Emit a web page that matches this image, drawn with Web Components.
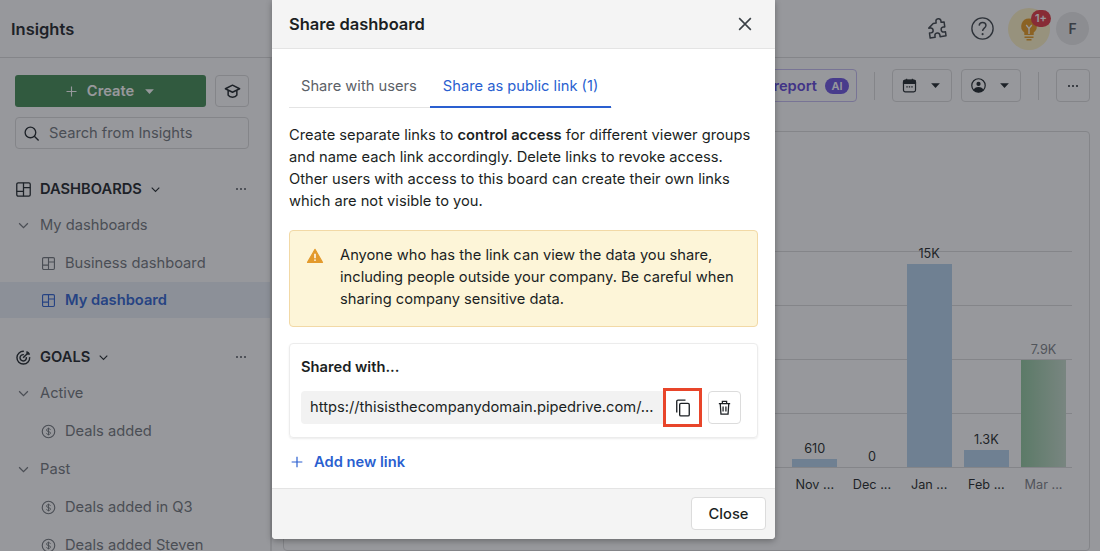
<!DOCTYPE html>
<html lang="en">
<head>
<meta charset="UTF-8">
<title>Insights - Share dashboard</title>
<style>
  html, body { margin: 0; height: 100%; overflow: hidden; }
  body { font-family: Inter, "Liberation Sans", sans-serif; font-size: 14.7px; color: #1b1f23; background: #fff; }
</style>
</head>
<body>

<script>
const ICONS = {
  plus: '<path d="M12 4v16M4 12h16" fill="none" stroke="currentColor" stroke-width="1.8"/>',
  caret: '<path d="M5 8.500h14l-7 7.500z" fill="currentColor"/>',
  chevron: '<path d="M5 8.500l7 7 7-7" fill="none" stroke="currentColor" stroke-width="2"/>',
  close: '<path d="M5 5l14 14M19 5L5 19" fill="none" stroke="currentColor" stroke-width="1.900"/>',
  dots: '<circle cx="6" cy="12" r="1.500" fill="currentColor"/><circle cx="12" cy="12" r="1.500" fill="currentColor"/><circle cx="18" cy="12" r="1.500" fill="currentColor"/>',
  search: '<circle cx="10.500" cy="10.500" r="7.500" fill="none" stroke="currentColor" stroke-width="1.900"/><path d="M16 16l6 6" fill="none" stroke="currentColor" stroke-width="1.900"/>',
  grad: '<path d="M12 4l9 4.500-9 4.500-9-4.500zM6.500 11v5.500c2 3.500 9 3.500 11 0V11" fill="none" stroke="currentColor" stroke-width="1.900" stroke-linejoin="round"/>',
  board: '<rect x="2.500" y="2.500" width="19" height="19" rx="2" fill="none" stroke="currentColor" stroke-width="1.800"/><path d="M12 2.500v19M2.500 14.500H12M12 9.500h9.500" fill="none" stroke="currentColor" stroke-width="1.800"/>',
  target: '<path d="M12.500 3.300A9 9 0 1 0 20.700 11.500" fill="none" stroke="currentColor" stroke-width="2"/><path d="M12.500 8A4.500 4.500 0 1 0 16 11.500" fill="none" stroke="currentColor" stroke-width="2"/><path d="M11.500 12.500L19.500 4.500M17 3v4h4" fill="none" stroke="currentColor" stroke-width="2"/>',
  dollar: '<circle cx="12" cy="12" r="10" fill="none" stroke="currentColor" stroke-width="1.800"/><path d="M15.200 9.200c-.5-1.300-1.700-1.800-3.200-1.800-1.800 0-3.200.9-3.200 2.300 0 3.200 6.400 1.600 6.400 4.800 0 1.400-1.400 2.300-3.200 2.300-1.600 0-2.800-.6-3.300-1.900M12 5.800v12.400" fill="none" stroke="currentColor" stroke-width="1.500"/>',
  puzzle: '<path d="M9 6h3V4.500a2.500 2.500 0 0 1 5 0V6h3v5h-1.500a2.500 2.500 0 0 0 0 5H20v4h-6v-1.500a2.500 2.500 0 0 0-5 0V20H4v-5h1.500a2.500 2.500 0 0 0 0-5H4l5-4z" fill="none" stroke="currentColor" stroke-width="1.500" stroke-linejoin="round" transform="rotate(-8 12 12)"/>',
  help: '<circle cx="12" cy="12" r="10.200" fill="none" stroke="currentColor" stroke-width="1.300"/><path d="M8.800 9.300c.2-1.900 1.600-3 3.300-3 1.800 0 3.200 1.200 3.200 2.800 0 2.500-3.200 2.600-3.200 5.200" fill="none" stroke="currentColor" stroke-width="1.400"/><circle cx="12.100" cy="17.400" r="1" fill="currentColor"/>',
  bulb: '<path d="M12 1.500a7.800 7.800 0 0 0-4.700 14V18h9.400v-2.500A7.800 7.800 0 0 0 12 1.500z" fill="currentColor"/><path d="M7.500 19.500h9V21h-9zM9.500 22h5v1.500h-5z" fill="currentColor"/><path d="M9.200 8l2.800 3.500L14.800 8M12 11.500V17" fill="none" stroke="#fff" stroke-width="1.300"/>',
  calendar: '<rect x="3.500" y="4.500" width="17" height="16.500" rx="2.500" fill="none" stroke="currentColor" stroke-width="1.700"/><path d="M3.500 9h17V7a2.500 2.500 0 0 0-2.500-2.500H6A2.500 2.500 0 0 0 3.500 7zM8 2.500v3M16 2.500v3" fill="currentColor" stroke="currentColor" stroke-width="1.500"/><path d="M7.500 14h2M11 14h2M14.500 14h2" stroke="currentColor" stroke-width="1.700"/>',
  user: '<circle cx="12" cy="12" r="9.500" fill="none" stroke="currentColor" stroke-width="1.700"/><circle cx="12" cy="9.800" r="3" fill="currentColor"/><path d="M5 18.500c1-3 3.500-4.500 7-4.500s6 1.500 7 4.500a9.500 9.500 0 0 1-14 0z" fill="currentColor"/>',
  warning: '<path d="M12 3l10 17.500H2z" fill="currentColor" stroke="currentColor" stroke-width="1.500" stroke-linejoin="round"/><path d="M12 9v6" stroke="#fff" stroke-width="2"/><circle cx="12" cy="17.500" r="1.100" fill="#fff"/>',
  copy: '<rect x="8" y="6.500" width="11.500" height="15" rx="1.500" fill="none" stroke="currentColor" stroke-width="1.600"/><path d="M4.500 17.500V4A1.500 1.500 0 0 1 6 2.500h9" fill="none" stroke="currentColor" stroke-width="1.600"/>',
  trash: '<path d="M4 6.500h16M9 6V3.500h6V6M6 6.500l1 15h10l1-15M10 10.500v7M14 10.500v7" fill="none" stroke="currentColor" stroke-width="1.800"/>'
};

class UiIcon extends HTMLElement {
  connectedCallback() {
    const size = this.getAttribute('size') || 16;
    this.attachShadow({ mode: 'open' }).innerHTML = `
      <style>:host { display: inline-flex; flex: none; } svg { display: block; }</style>
      <svg width="${size}" height="${size}" viewBox="0 0 24 24">${ICONS[this.getAttribute('name')]}</svg>`;
  }
}
customElements.define('ui-icon', UiIcon);

class TopBar extends HTMLElement {
  constructor() {
    super();
    this.attachShadow({ mode: 'open' }).innerHTML = `
      <style>
        :host { display: flex; align-items: center; height: 58px; box-sizing: border-box; border-bottom: 1px solid #dcdcdc; padding: 0 11px; }
        h1 { margin: 0; font-size: 16.500px; font-weight: 600; flex: 1; color: #192024; }
        .tools { display: flex; align-items: center; color: #3a4046; }
        .puzzle { margin-right: 21px; }
        .tip { position: relative; width: 42px; height: 42px; border-radius: 50%; background: #fff3c4; margin: 0 6px 0 13px; display: flex; align-items: center; justify-content: center; color: #e89a1c; }
        .badge { position: absolute; left: 23px; top: 2px; width: 20px; height: 17px; border-radius: 9px; background: #e2343e; color: #fff; font-size: 11px; font-weight: 600; display: flex; align-items: center; justify-content: center; }
        .avatar { width: 33px; height: 33px; border-radius: 50%; background: #eaeaea; color: #50565c; font-size: 14px; font-weight: 600; display: flex; align-items: center; justify-content: center; }
      </style>
      <h1>Insights</h1>
      <div class="tools">
        <ui-icon class="puzzle" name="puzzle" size="24"></ui-icon>
        <ui-icon name="help" size="25"></ui-icon>
        <div class="tip"><ui-icon name="bulb" size="24"></ui-icon><span class="badge">1+</span></div>
        <div class="avatar">F</div>
      </div>`;
  }
}
customElements.define('top-bar', TopBar);

class NavItem extends HTMLElement {
  constructor() {
    super();
    const level = this.getAttribute('level');
    const icon = this.getAttribute('icon');
    this.attachShadow({ mode: 'open' }).innerHTML = `
      <style>
        :host { display: flex; align-items: center; box-sizing: border-box; height: 38px; color: #6f7479; white-space: nowrap; }
        :host([level="group"]) { padding-left: 16px; gap: 9px; }
        :host([level="leaf"]) { padding-left: 41px; gap: 9px; }
        :host([active]) { height: 36px; color: #2a5fd0; font-weight: 600; background: #ebf0f8; }
      </style>
      ${level === 'group' ? '<ui-icon name="chevron" size="15"></ui-icon>' : ''}
      ${icon ? `<ui-icon name="${icon}" size="15"></ui-icon>` : ''}
      <slot></slot>`;
  }
}
customElements.define('nav-item', NavItem);

class NavSection extends HTMLElement {
  constructor() {
    super();
    this.attachShadow({ mode: 'open' }).innerHTML = `
      <style>
        :host { display: block; }
        .head { display: flex; align-items: center; height: 34px; padding: 0 21px 0 15px; font-weight: 600; color: #192024; gap: 8px; }
        .head .chev { margin-left: -1px; }
        .more { margin-left: auto; color: #4a5056; }
      </style>
      <div class="head">
        <ui-icon name="${this.getAttribute('icon')}" size="17"></ui-icon>
        <span>${this.getAttribute('label')}</span>
        <ui-icon class="chev" name="chevron" size="13"></ui-icon>
        <ui-icon class="more" name="dots" size="16"></ui-icon>
      </div>
      <slot></slot>`;
  }
}
customElements.define('nav-section', NavSection);

class SideBar extends HTMLElement {
  constructor() {
    super();
    this.attachShadow({ mode: 'open' }).innerHTML = `
      <style>
        :host { display: block; box-sizing: border-box; border-right: 2px solid #e4e4e4; overflow: hidden; }
        .actions { display: grid; grid-template-columns: 191px 34px; gap: 10px 9px; padding: 17px 0 0 15px; }
        .create { height: 32px; border-radius: 3px; background: #3f8a50; color: #fff; display: flex; align-items: center; justify-content: center; gap: 8px; font-weight: 600; }
        .learn { height: 32px; box-sizing: border-box; border: 1px solid #dcdcdc; border-radius: 4px; display: flex; align-items: center; justify-content: center; color: #192024; }
        .search { grid-column: 1 / 3; height: 32px; box-sizing: border-box; border: 1px solid #dcdcdc; border-radius: 4px; display: flex; align-items: center; gap: 9px; padding-left: 7px; color: #6f7479; }
        .search ui-icon { color: #192024; }
        .sections { padding-top: 23px; display: flex; flex-direction: column; }
        nav-section + nav-section { margin-top: 22px; }
      </style>
      <div class="actions">
        <div class="create"><ui-icon name="plus" size="15"></ui-icon>Create<ui-icon name="caret" size="15"></ui-icon></div>
        <div class="learn"><ui-icon name="grad" size="19"></ui-icon></div>
        <div class="search"><ui-icon name="search" size="17"></ui-icon>Search from Insights</div>
      </div>
      <div class="sections">
        <nav-section icon="board" label="DASHBOARDS">
          <nav-item level="group">My dashboards</nav-item>
          <nav-item level="leaf" icon="board">Business dashboard</nav-item>
          <nav-item level="leaf" icon="board" active>My dashboard</nav-item>
        </nav-section>
        <nav-section icon="target" label="GOALS">
          <nav-item level="group">Active</nav-item>
          <nav-item level="leaf" icon="dollar">Deals added</nav-item>
          <nav-item level="group">Past</nav-item>
          <nav-item level="leaf" icon="dollar">Deals added in Q3</nav-item>
          <nav-item level="leaf" icon="dollar">Deals added Steven</nav-item>
        </nav-section>
      </div>`;
  }
}
customElements.define('side-bar', SideBar);

class ToolBar extends HTMLElement {
  constructor() {
    super();
    this.attachShadow({ mode: 'open' }).innerHTML = `
      <style>
        :host { display: flex; justify-content: flex-end; align-items: center; height: 33px; padding: 11px 10px 0 0; gap: 9px; color: #192024; }
        .btn { height: 33px; box-sizing: border-box; border: 1px solid #dcdcdc; border-radius: 4px; display: flex; align-items: center; justify-content: center; }
        .report { width: 110px; border-color: #c5bcf2; color: #5d43d8; font-weight: 600; gap: 8px; padding-right: 7px; box-sizing: border-box; justify-content: flex-end; }
        .ai { background: #6a52e0; color: #fff; font-size: 11px; font-weight: 600; height: 16px; width: 24px; border-radius: 8px; display: flex; align-items: center; justify-content: center; }
        .sep { width: 1px; height: 28px; background: #dcdcdc; margin: 0 8px; }
        .pick { width: 60px; gap: 10px; }
        .more { width: 34px; }
      </style>
      <div class="btn report">report<span class="ai">AI</span></div>
      <div class="sep"></div>
      <div class="btn pick"><ui-icon name="calendar" size="17"></ui-icon><ui-icon name="caret" size="15"></ui-icon></div>
      <div class="btn pick"><ui-icon name="user" size="17"></ui-icon><ui-icon name="caret" size="15"></ui-icon></div>
      <div class="sep"></div>
      <div class="btn more"><ui-icon name="dots" size="16"></ui-icon></div>`;
  }
}
customElements.define('tool-bar', ToolBar);

class ChartBar extends HTMLElement {
  constructor() {
    super();
    const h = this.getAttribute('height');
    this.attachShadow({ mode: 'open' }).innerHTML = `
      <style>
        :host { display: flex; flex-direction: column; justify-content: flex-end; align-items: center; width: 45px; height: 100%; font-size: 12.700px; color: #1b1f23; }
        :host([faded]) { color: #7b8085; }
        .bar { width: 45px; height: ${h}px; flex: none; margin-top: 3px; background: #b4d2ec; }
        :host([faded]) .bar { background: linear-gradient(90deg, #8fc79c, #c6dccb); }
        span { line-height: 14px; flex: none; }
      </style>
      <span>${this.getAttribute('value')}</span>
      <div class="bar"></div>`;
  }
}
customElements.define('chart-bar', ChartBar);

class BarChart extends HTMLElement {
  constructor() {
    super();
    const data = [['Nov ...', '610', 8], ['Dec ...', '0', 0], ['Jan ...', '15K', 203], ['Feb ...', '1.3K', 17], ['Mar ...', '7.9K', 107, true]];
    this.attachShadow({ mode: 'open' }).innerHTML = `
      <style>
        :host { display: block; margin: 29px 10px 0 11px; height: 420px; box-sizing: border-box; border: 1px solid #dcdcdc; border-radius: 4px; padding-top: 119px; }
        .plot { height: 217px; display: flex; justify-content: flex-end; gap: 12.200px; box-sizing: border-box;
          background: repeating-linear-gradient(to top, #dcdcdc 0, #dcdcdc 1px, transparent 1px, transparent 54px); margin-right: 17px; padding-right: 6px; }
        .plot chart-bar { padding-bottom: 1px; box-sizing: border-box; }
        .axis { display: flex; justify-content: flex-end; gap: 12.200px; padding-right: 23px; margin-top: 9px; font-size: 12.700px; color: #1b1f23; }
        .axis span { width: 45px; text-align: center; white-space: nowrap; }
        .axis .faded { color: #7b8085; }
      </style>
      <div class="plot">${data.map(d => `<chart-bar value="${d[1]}" height="${d[2]}" ${d[3] ? 'faded' : ''}></chart-bar>`).join('')}</div>
      <div class="axis">${data.map(d => `<span class="${d[3] ? 'faded' : ''}">${d[0]}</span>`).join('')}</div>`;
  }
}
customElements.define('bar-chart', BarChart);

class ShareModal extends HTMLElement {
  constructor() {
    super();
    this.attachShadow({ mode: 'open' }).innerHTML = `
      <style>
        :host { position: absolute; left: 272px; top: 0; width: 503px; height: 539px; display: flex; flex-direction: column; background: #fff; border-radius: 0 0 4px 4px; box-shadow: 0 2px 6px rgba(0,0,0,.3); line-height: 22px; color: #1b1f23; }
        header { height: 49px; flex: none; box-sizing: border-box; background: #f4f4f4; border-bottom: 1px solid #e4e4e4; display: flex; align-items: center; justify-content: space-between; padding: 0 20px 0 17px; }
        h2 { margin: 0; font-size: 16.500px; font-weight: 600; }
        header ui-icon { color: #3a4046; }
        .content { flex: 1; padding: 15px 17px 0; }
        .tabs { display: flex; border-bottom: 1px solid #e4e4e4; width: 323px; height: 44px; box-sizing: border-box; }
        .tab { padding: 0 13px 0 12px; line-height: 44px; color: #5c6167; white-space: nowrap; height: 44px; box-sizing: border-box; }
        .tab.on { color: #2a5fd0; border-bottom: 2px solid #2a5fd0; padding: 0 13px; }
        p { margin: 16px 0 0; }
        .notice { margin-top: 18px; height: 97px; box-sizing: border-box; background: #fdf5d8; border: 1px solid #f2d9a6; border-radius: 4px; display: flex; padding: 13px 12px 0 16px; gap: 16px; }
        .notice ui-icon { color: #e39a2d; margin-top: 3px; }
        .links { margin-top: 16px; height: 95px; box-sizing: border-box; border: 1px solid #ececec; border-radius: 4px; box-shadow: 0 1px 2px rgba(0,0,0,.08); padding: 12px 16px 0 11px; }
        .links strong { font-weight: 600; display: block; }
        .row { display: flex; align-items: center; margin-top: 13px; height: 33px; }
        .url { width: 362px; flex: none; height: 33px; box-sizing: border-box; background: #f2f2f2; border-radius: 4px 0 0 4px; padding: 0 9px; line-height: 33px; white-space: nowrap; }
        .icon-btn { width: 33px; height: 33px; box-sizing: border-box; border: 1px solid #dcdcdc; border-radius: 4px; display: flex; align-items: center; justify-content: center; background: #fff; flex: none; }
        .copy { margin: 0 9px 0 3px; border-color: transparent; outline: 3px solid #e8452a; outline-offset: 0; border-radius: 0; }
        .add { display: flex; align-items: center; gap: 9px; margin: 13px 0 0 0; color: #2a5fd0; font-weight: 600; }
        footer { height: 51px; flex: none; box-sizing: border-box; background: #f4f4f4; border-top: 1px solid #e4e4e4; border-radius: 0 0 4px 4px; display: flex; justify-content: flex-end; align-items: center; padding: 0 9px 1px 0; }
        .close { width: 75px; height: 33px; box-sizing: border-box; border: 1px solid #dcdcdc; border-radius: 4px; background: #fff; display: flex; align-items: center; justify-content: center; font-weight: 500; }
      </style>
      <header><h2>Share dashboard</h2><ui-icon name="close" size="20"></ui-icon></header>
      <div class="content">
        <div class="tabs"><div class="tab">Share with users</div><div class="tab on">Share as public link (1)</div></div>
        <p>Create separate links to <b style="font-weight:600">control access</b> for different viewer groups and name each link accordingly. Delete links to revoke access. Other users with access to this board can create their own links which are not visible to you.</p>
        <div class="notice"><ui-icon name="warning" size="18"></ui-icon><span>Anyone who has the link can view the data you share, including people outside your company. Be careful when sharing company sensitive data.</span></div>
        <div class="links">
          <strong>Shared with...</strong>
          <div class="row">
            <div class="url">https://thisisthecompanydomain.pipedrive.com/...</div>
            <div class="icon-btn copy"><ui-icon name="copy" size="20"></ui-icon></div>
            <div class="icon-btn"><ui-icon name="trash" size="17"></ui-icon></div>
          </div>
        </div>
        <div class="add"><ui-icon name="plus" size="16"></ui-icon>Add new link</div>
      </div>
      <footer><div class="close">Close</div></footer>`;
  }
}
customElements.define('share-modal', ShareModal);

class InsightsApp extends HTMLElement {
  constructor() {
    super();
    this.attachShadow({ mode: 'open' }).innerHTML = `
      <style>
        :host { display: grid; grid-template-rows: 58px 1fr; grid-template-columns: 272px 1fr; height: 100vh; overflow: hidden; position: relative; }
        top-bar { grid-column: 1 / 3; }
        main { min-width: 0; overflow: hidden; }
        .scrim { position: absolute; inset: 0; background: rgba(34,37,44,.47); }
      </style>
      <top-bar></top-bar>
      <side-bar></side-bar>
      <main><tool-bar></tool-bar><bar-chart></bar-chart></main>
      <div class="scrim"></div>
      <share-modal></share-modal>`;
  }
}
customElements.define('insights-app', InsightsApp);

document.body.appendChild(document.createElement('insights-app'));
</script>

</body>
</html>
